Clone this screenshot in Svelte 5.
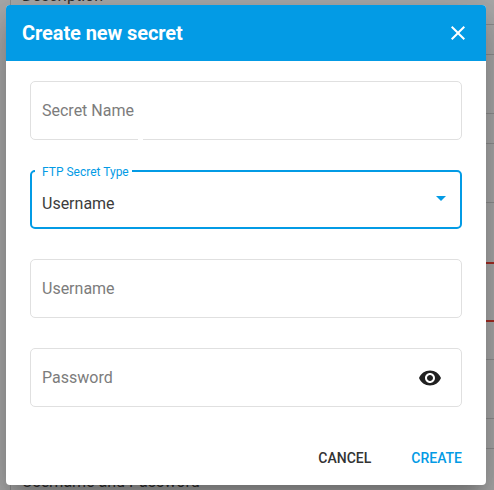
<script lang="ts">
  type Row = {
    top: number;
    label?: string;
    invalid?: boolean;
  };

  const rows: Row[] = [
    { top: -35, label: 'Description' },
    { top: 29 },
    { top: 29 },
    { top: 59, invalid: true },
    { top: 37 },
    { top: 29, label: 'Username and Password' }
  ];

  let secretName = $state('');
  let username = $state('');
  let password = $state('');
  let visible = $state(false);
</script>

<div class="page">
  <div class="form" aria-hidden="true">
    {#each rows as row}
      <div class="row" class:invalid={row.invalid} style={`margin-top: ${row.top}px`}>{row.label ?? ''}</div>
    {/each}
  </div>

  <div class="backdrop">
    <div class="dialog" role="dialog" aria-labelledby="title">
      <header>
        <h2 id="title">Create new secret</h2>
        <button class="close" aria-label="Close">
          <svg width="24" height="24" viewBox="0 0 24 24">
            <path fill="currentColor" d="M19 6.41 17.59 5 12 10.59 6.41 5 5 6.41 10.59 12 5 17.59 6.41 19 12 13.41 17.59 19 19 17.59 13.41 12z" />
          </svg>
        </button>
      </header>

      <div class="content">
        <div class="field notched">
          <input placeholder="Secret Name" bind:value={secretName} />
        </div>

        <div class="field select">
          <span class="label">FTP Secret Type</span>
          <span class="value">Username</span>
          <svg class="arrow" width="10" height="5" viewBox="0 0 10 5">
            <path fill="currentColor" d="M0 0h10L5 5z" />
          </svg>
        </div>

        <div class="field">
          <input placeholder="Username" bind:value={username} />
        </div>

        <div class="field">
          <input type={visible ? 'text' : 'password'} placeholder="Password" bind:value={password} />
          <button class="eye" aria-label="Show password" onclick={() => (visible = !visible)}>
            <svg width="24" height="24" viewBox="0 0 24 24">
              <path fill="currentColor" d="M12 4.5C7 4.5 2.73 7.61 1 12c1.73 4.39 6 7.5 11 7.5s9.27-3.11 11-7.5c-1.73-4.39-6-7.5-11-7.5zM12 17c-2.76 0-5-2.24-5-5s2.24-5 5-5 5 2.24 5 5-2.24 5-5 5zm0-8c-1.66 0-3 1.34-3 3s1.34 3 3 3 3-1.34 3-3-1.34-3-3-3z" />
            </svg>
          </button>
        </div>
      </div>

      <footer>
        <button class="action">Cancel</button>
        <button class="action primary">Create</button>
      </footer>
    </div>
  </div>
</div>

<style>
  .page {
    position: relative;
    height: 490px;
    overflow: hidden;
    background: #fafafa;
    font-family: Roboto, sans-serif;
  }

  .form {
    display: flex;
    flex-direction: column;
    width: 600px;
    margin-left: 10px;
  }

  .row {
    flex: none;
    box-sizing: border-box;
    height: 60px;
    padding-left: 11px;
    border: 1px solid #d2d2d2;
    border-radius: 4px;
    font-size: 16px;
    line-height: 60px;
    color: #444;
  }

  .row:last-child {
    line-height: 66px;
  }

  .row.invalid {
    border: 2px solid #f44336;
  }

  .backdrop {
    position: absolute;
    inset: 0;
    padding: 5px 8px 5px 6px;
    background: rgba(0, 0, 0, 0.32);
  }

  .dialog {
    display: flex;
    flex-direction: column;
    height: 480px;
    border-radius: 4px;
    overflow: hidden;
    background: #fff;
    box-shadow:
      0 11px 15px -7px rgba(0, 0, 0, 0.2),
      0 24px 38px 3px rgba(0, 0, 0, 0.14),
      0 9px 46px 8px rgba(0, 0, 0, 0.12);
  }

  header {
    display: flex;
    align-items: center;
    justify-content: space-between;
    height: 56px;
    padding: 0 16px;
    background: #039be5;
    color: #fff;
  }

  h2 {
    margin: 0;
    font-size: 20px;
    font-weight: 700;
    letter-spacing: -0.08px;
  }

  button {
    display: flex;
    padding: 0;
    border: 0;
    background: none;
    font-family: inherit;
    color: #212121;
    cursor: pointer;
  }

  .close {
    color: #fff;
  }

  .content {
    display: flex;
    flex-direction: column;
    gap: 30px;
    padding: 20px 24px 0;
  }

  .field {
    position: relative;
    display: flex;
    align-items: center;
    box-sizing: border-box;
    height: 59px;
    padding: 0 19px 0 11px;
    border: 1px solid #e0e0e0;
    border-radius: 5px;
  }

  .notched::after {
    content: '';
    position: absolute;
    left: 107px;
    bottom: -1px;
    width: 5px;
    height: 1px;
    background: #fff;
  }

  input {
    flex: 1;
    min-width: 0;
    padding: 0;
    border: 0;
    outline: 0;
    background: none;
    font: 16px Roboto, sans-serif;
    color: #444;
  }

  input::placeholder {
    color: #7c7c7c;
    opacity: 1;
  }

  .select {
    justify-content: space-between;
    padding: 0 14px 0 10px;
    border: 2px solid #039be5;
    color: #039be5;
  }

  .label {
    position: absolute;
    top: -8px;
    left: 3px;
    padding: 0 3px 0 7px;
    background: #fff;
    font-size: 12px;
    line-height: 16px;
  }

  .value {
    padding-top: 8px;
    font-size: 16px;
    color: #3c3c3c;
  }

  .arrow {
    margin-bottom: 2px;
  }

  footer {
    display: flex;
    align-items: center;
    justify-content: flex-end;
    gap: 40px;
    margin-top: 39px;
    padding-right: 24px;
  }

  .action {
    font-size: 14px;
    font-weight: 500;
    line-height: 24px;
    text-transform: uppercase;
    color: #333;
  }

  .action.primary {
    color: #039be5;
  }
</style>
